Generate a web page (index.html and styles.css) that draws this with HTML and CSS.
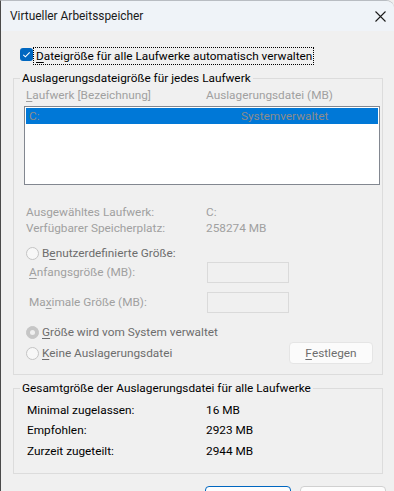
FILE: index.html
```html
<!DOCTYPE html>
<html lang="de">
<head>
<meta charset="utf-8">
<title>Virtueller Arbeitsspeicher</title>
<link rel="stylesheet" href="styles.css">
</head>
<body>
<div class="window">
  <div class="titlebar">
    <span class="title">Virtueller Arbeitsspeicher</span>
    <svg class="close" width="11" height="11" viewBox="0 0 11 11"><path d="M0.5 0.5L10.5 10.5M10.5 0.5L0.5 10.5" stroke="#1b1b1b" stroke-width="1.1" fill="none"/></svg>
  </div>
  <div class="content">
    <div class="check-row">
      <span class="checkbox"><svg width="13" height="13" viewBox="0 0 13 13"><path d="M3.3 6.8L5.4 8.8L9.7 4.3" stroke="#fff" stroke-width="1.1" fill="none"/></svg></span>
      <span class="focus"><u>D</u>ateigröße für alle Laufwerke automatisch verwalten</span>
    </div>

    <fieldset class="group g1">
      <legend>Auslagerungsdateigröße für jedes Laufwerk</legend>
      <div class="inner">
        <div class="row hdr dis"><span class="col1"><u>L</u>aufwerk [Bezeichnung]</span><span>Auslagerungsdatei (MB)</span></div>
        <div class="listbox">
          <div class="item sel"><span class="drive">C:</span><span class="state">Systemverwaltet</span></div>
        </div>
        <div class="row info dis first"><span class="col1">Ausgewähltes Laufwerk:</span><span>C:</span></div>
        <div class="row info dis"><span class="col1">Verfügbarer Speicherplatz:</span><span>258274 MB</span></div>
        <div class="row radio-row r1"><span class="radio"></span><span class="mid">B<u>e</u>nutzerdefinierte Größe:</span></div>
        <div class="row field-row f1"><span class="flabel dis"><u>A</u>nfangsgröße (MB):</span><span class="textbox"></span></div>
        <div class="row field-row f2"><span class="flabel dis">Ma<u>x</u>imale Größe (MB):</span><span class="textbox"></span></div>
        <div class="row radio-row r2"><span class="radio checked"></span><span class="mid"><u>G</u>röße wird vom System verwaltet</span></div>
        <div class="row radio-row r3"><span class="radio"></span><span class="mid"><u>K</u>eine Auslagerungsdatei</span><span class="btn-set"><u>F</u>estlegen</span></div>
      </div>
    </fieldset>

    <fieldset class="group g2">
      <legend>Gesamtgröße der Auslagerungsdatei für alle Laufwerke</legend>
      <div class="inner2">
        <div class="row tot"><span class="col2">Minimal zugelassen:</span><span>16 MB</span></div>
        <div class="row tot"><span class="col2">Empfohlen:</span><span>2923 MB</span></div>
        <div class="row tot t3"><span class="col2">Zurzeit zugeteilt:</span><span>2944 MB</span></div>
      </div>
    </fieldset>

    <div class="buttons">
      <span class="btn primary"></span>
      <span class="btn"></span>
    </div>
  </div>
</div>
</body>
</html>
```
FILE: styles.css
```css
html, body { margin: 0; padding: 0; }
body {
  width: 394px; height: 491px; overflow: hidden;
  background: #f0f0f0;
  font-family: Roboto, "Noto Sans", sans-serif;
  font-size: 11.8px;
  color: #000;
}
u { text-decoration-thickness: 1px; text-underline-offset: 2px; }
.window {
  box-sizing: border-box;
  width: 394px; height: 491px;
  border-left: 1px solid #4a4a4a;
  border-top: 1px solid #b8bcc2;
  border-top-right-radius: 8px;
  background: #f0f0f0;
  overflow: hidden;
}
.titlebar {
  height: 30px;
  background: #eff3f8;
  display: flex; align-items: center; justify-content: space-between;
  padding: 0 8px 0 9px;
}
.title { font-size: 11.9px; color: #1a1a1a; }
.content { padding: 17px 11px 0 12px; }
.check-row { display: flex; align-items: flex-start; height: 16px; }
.checkbox {
  width: 13px; height: 13px; border-radius: 3px; background: #0067c0;
  margin-left: 7px; margin-right: 1px; display: flex; flex: none;
}
.focus {
  outline: 1px dotted #000; outline-offset: 0;
  padding: 0 1px 0 2px; line-height: 16px; height: 16px; white-space: nowrap;
}
.group {
  margin: 0; padding: 0;
  border: 1px solid #dcdcdc;
  min-width: 0;
}
.group legend {
  margin-left: 6px; padding: 0 2px;
  line-height: 15px; height: 15px; color: #000; white-space: nowrap;
}
.g1 { margin-top: 7px; padding-bottom: 10px; }
.g2 { margin-top: 6px; padding-bottom: 12px; }
.inner { padding: 1px 0 0 10px; }
.row { display: flex; align-items: center; white-space: nowrap; }
.dis { color: #a0a0a0; }
.mid { color: #6d6d6d; }
.hdr { height: 16px; padding-left: 2px; }
.col1 { width: 180px; flex: none; }
.listbox {
  margin-top: 3px; width: 356px; height: 79px; box-sizing: border-box;
  border: 1px solid #828790; background: #fff; padding: 1px;
}
.item { height: 16px; display: flex; align-items: center; color: #8c8c8c; white-space: nowrap; }
.item.sel { background: #0078d7; }
.drive { padding-left: 3px; width: 212px; flex: none; }
.info { height: 16px; padding-left: 2px; }
.info.first { margin-top: 19px; }
.radio-row { height: 16px; padding-left: 2px; }
.radio {
  width: 13px; height: 13px; box-sizing: border-box; border-radius: 50%;
  border: 1px solid #c4c4c4; background: #f7f7f7; margin-right: 3px; flex: none;
}
.radio.checked { background: #c6c6c6; border-color: #c6c6c6; position: relative; }
.radio.checked::after {
  content: ""; position: absolute; left: 3px; top: 3px; width: 5px; height: 5px;
  border-radius: 50%; background: #efefef;
}
.r1 { margin-top: 9px; }
.field-row { height: 22px; padding-left: 5px; }
.f2 { margin-top: 8px; }
.flabel { width: 178px; flex: none; }
.textbox {
  width: 82px; height: 21px; box-sizing: border-box;
  border: 1px solid #dadada; background: #f0f0f0;
}
.r2 { margin-top: 11px; }
.r3 { height: 22px; margin-top: 2px; }
.btn-set {
  margin-left: auto; margin-right: 9px;
  width: 84px; height: 22px; box-sizing: border-box;
  border: 1px solid #e5e5e5; border-radius: 4px; background: #fbfbfb;
  display: flex; align-items: center; justify-content: center; color: #6d6d6d;
}
.inner2 { padding: 4px 0 0 13px; }
.tot { height: 20px; }
.t3 { height: 21px; }
.col2 { width: 179px; flex: none; }
.buttons { display: flex; gap: 9px; margin-top: 12px; padding-left: 192px; }
.btn {
  width: 86px; height: 24px; box-sizing: border-box; border-radius: 4px;
  border: 1px solid #d0d0d0; background: #fdfdfd; flex: none;
}
.btn.primary { border-color: #0067c0; }
```
